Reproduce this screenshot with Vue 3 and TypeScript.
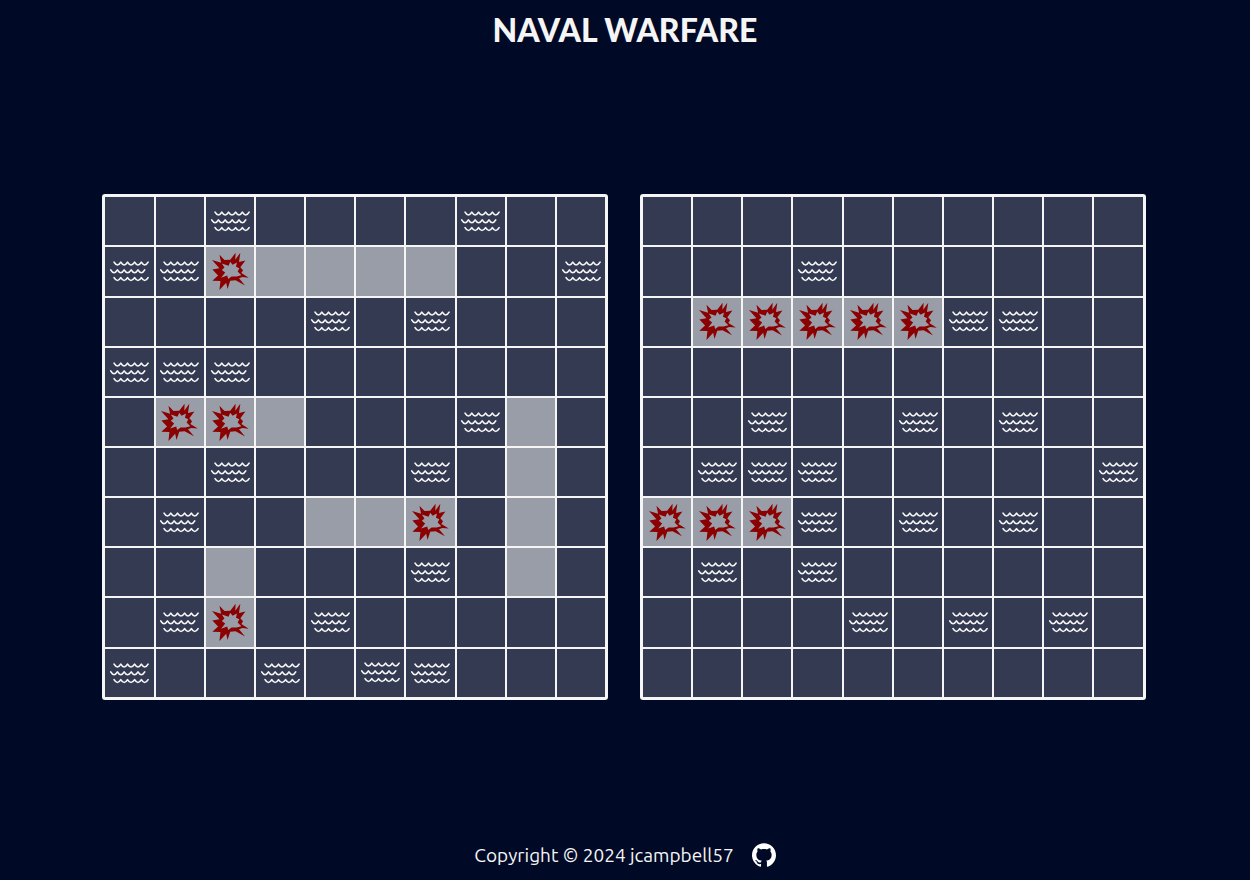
<script setup lang="ts">
interface Board {
  name: string
  rows: string[]
}

// '.' water, '~' missed shot, '#' ship, 'x' ship that was hit
const boards: Board[] = [
  {
    name: 'Your fleet',
    rows: [
      '..~....~..',
      '~~x####..~',
      '....~.~...',
      '~~~.......',
      '.xx#...~#.',
      '..~...~.#.',
      '.~..##x.#.',
      '..#...~.#.',
      '.~x.~.....',
      '~..~.~~...',
    ],
  },
  {
    name: 'Enemy waters',
    rows: [
      '..........',
      '...~......',
      '.xxxxx~~..',
      '..........',
      '..~..~.~..',
      '.~~~.....~',
      'xxx~.~.~..',
      '.~.~......',
      '....~.~.~.',
      '..........',
    ],
  },
]

const states: Record<string, string> = { '.': 'water', '~': 'miss', '#': 'ship', x: 'hit' }
</script>

<template>
  <div class="page">
    <header class="header">
      <h1 class="title">NAVAL WARFARE</h1>
    </header>
    <main class="boards">
      <section v-for="board in boards" :key="board.name" class="board" :aria-label="board.name">
        <template v-for="(row, r) in board.rows" :key="r">
          <button
            v-for="(cell, c) in row"
            :key="c"
            type="button"
            class="cell"
            :class="{ ship: cell === '#' || cell === 'x' }"
            :aria-label="`Row ${r + 1}, column ${c + 1}: ${states[cell]}`"
          >
            <svg v-if="cell === '~'" class="mark" viewBox="0 0 120 120" aria-hidden="true">
              <g fill="none" stroke="#f5f5f5" stroke-width="5" stroke-linecap="round" stroke-linejoin="round">
                <path d="M15 33q10 17 20 0q10 17 20 0q10 17 21 0q10 17 20 0q10 17 20 0" />
                <path d="M5 56q10 17 20 0q10 17 20 0q10 17 21 0q10 17 20 0q10 17 20 0" />
                <path d="M15 79q10 17 20 0q10 17 20 0q10 17 21 0q10 17 20 0q10 17 20 0" />
              </g>
            </svg>
            <svg v-else-if="cell === 'x'" class="mark" viewBox="0 0 120 120" aria-hidden="true">
              <path
                fill="#8b0000"
                fill-rule="evenodd"
                d="M6 27L33 35L28 11L43 27L60 26L76 5L75 26L90 5L86 33L105 28L90 48L98 57L93 65L115 79L96 77L86 81L104 102L76 87L60 88L52 113L48 94L28 116L31 89L7 88L24 73L7 55L28 51ZM35 37L43 49L35 56L45 64L33 79L51 73L54 83L64 76L79 76L93 72L82 61L87 51L77 47L80 34L67 41L60 32L55 44Z"
              />
            </svg>
          </button>
        </template>
      </section>
    </main>
    <footer class="footer">
      <span>Copyright © 2024 jcampbell57</span>
      <a class="github" href="https://github.com/jcampbell57" aria-label="GitHub profile">
        <svg viewBox="0 0 24 24" width="24" height="24" aria-hidden="true">
          <path
            fill="currentColor"
            d="M12 .297c-6.63 0-12 5.373-12 12 0 5.303 3.438 9.8 8.205 11.385.6.113.82-.258.82-.577 0-.285-.01-1.04-.015-2.04-3.338.724-4.042-1.61-4.042-1.61C4.422 18.07 3.633 17.7 3.633 17.7c-1.087-.744.084-.729.084-.729 1.205.084 1.838 1.236 1.838 1.236 1.07 1.835 2.809 1.305 3.495.998.108-.776.417-1.305.76-1.605-2.665-.3-5.466-1.332-5.466-5.93 0-1.31.465-2.38 1.235-3.22-.135-.303-.54-1.523.105-3.176 0 0 1.005-.322 3.3 1.23.96-.267 1.98-.399 3-.405 1.02.006 2.04.138 3 .405 2.28-1.552 3.285-1.23 3.285-1.23.645 1.653.24 2.873.12 3.176.765.84 1.23 1.91 1.23 3.22 0 4.61-2.805 5.625-5.475 5.92.42.36.81 1.096.81 2.22 0 1.606-.015 2.896-.015 3.286 0 .315.21.69.825.57C20.565 22.092 24 17.592 24 12.297c0-6.627-5.373-12-12-12"
          />
        </svg>
      </a>
    </footer>
  </div>
</template>

<style>
body {
  margin: 0;
  background: #000926;
}
</style>

<style scoped>
.page {
  display: flex;
  flex-direction: column;
  min-height: 100vh;
  background: #000926;
  color: #f5f5f5;
  font-family: Ubuntu, 'Noto Sans', 'Open Sans', sans-serif;
}

.header {
  display: flex;
  justify-content: center;
  height: 62px;
}

.title {
  margin: 8px 0 0;
  font-family: Lato, Ubuntu, 'Noto Sans', sans-serif;
  font-size: 32px;
  font-weight: 900;
  line-height: 44px;
}

.boards {
  flex: 1;
  display: flex;
  flex-wrap: wrap;
  justify-content: center;
  align-items: center;
  gap: 32px;
  padding-right: 2px;
}

.board {
  box-sizing: border-box;
  display: grid;
  grid-template-columns: repeat(10, 1fr);
  grid-template-rows: repeat(10, 1fr);
  gap: 2px;
  width: 40.45vw;
  aspect-ratio: 1;
  padding: 3px;
  border-radius: 3px;
  background: #f5f5f5;
}

.cell {
  display: flex;
  align-items: center;
  justify-content: center;
  min-width: 0;
  min-height: 0;
  margin: 0;
  padding: 0;
  border: 0;
  border-radius: 0;
  background: #333a51;
  cursor: crosshair;
}

.ship {
  background: #999da8;
}

.mark {
  display: block;
  width: 84%;
}

.footer {
  display: flex;
  align-items: center;
  justify-content: center;
  gap: 18px;
  height: 46px;
  padding: 0 0 2px;
  font-size: 19px;
  line-height: 24px;
}

.github {
  display: flex;
  color: #ffffff;
}
</style>
